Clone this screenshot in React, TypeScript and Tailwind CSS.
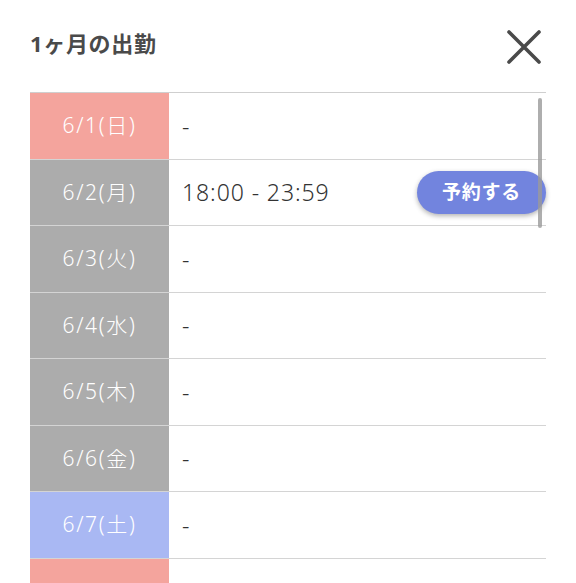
import React from "react";

type Day = { label: string; kind: "sun" | "sat" | "week"; time?: string };

const days: Day[] = [
  { label: "6/1(日)", kind: "sun" },
  { label: "6/2(月)", kind: "week", time: "18:00 - 23:59" },
  { label: "6/3(火)", kind: "week" },
  { label: "6/4(水)", kind: "week" },
  { label: "6/5(木)", kind: "week" },
  { label: "6/6(金)", kind: "week" },
  { label: "6/7(土)", kind: "sat" },
  { label: "6/8(日)", kind: "sun" },
];

const cellBg = {
  sun: "bg-[#f4a49d]",
  sat: "bg-[#a9b8f3]",
  week: "bg-[#acacac]",
};

export default function App() {
  return (
    <div
      className="h-[583px] w-[576px] overflow-hidden bg-white"
      style={{ fontFamily: '"Noto Sans", "Noto Sans CJK JP", sans-serif' }}
    >
      {/* header */}
      <div className="flex h-[92px] items-start justify-between pl-[30px] pr-[32px] pt-[24px]">
        <h2 className="text-[22px] font-bold leading-[38px] tracking-[0.03em] text-[#4a4a4a]">
          1ヶ月の出勤
        </h2>
        <button aria-label="閉じる" className="mt-[3px]">
          <svg width="40" height="40" viewBox="0 0 40 40">
            <path d="M5 5 L35 35 M35 5 L5 35" stroke="#4a4a4a" strokeWidth="3.6" strokeLinecap="round" />
          </svg>
        </button>
      </div>

      {/* list */}
      <div className="relative ml-[30px] w-[516px]">
        <div className="border-t border-[#cfcfcf]">
          {days.map((d) => (
            <div key={d.label} className="flex h-[66.5px] border-b-[1.5px] border-[#d4d4d4]">
              <div
                className={`flex w-[139px] shrink-0 items-center justify-center text-[21px] font-light tracking-[0.08em] text-white ${cellBg[d.kind]}`}
              >
                {d.label}
              </div>
              <div className="flex flex-1 items-center justify-between pl-[13px] text-[23px] font-light tracking-[0.04em] text-[#333]">
                <span>{d.time ?? "-"}</span>
                {d.time && (
                  <button className="h-[43px] w-[129px] rounded-full bg-[#7284de] text-[19px] font-semibold tracking-[0.04em] text-white shadow-[0_2px_5px_rgba(0,0,0,0.3)]">
                    予約する
                  </button>
                )}
              </div>
            </div>
          ))}
        </div>
        {/* scrollbar */}
        <div className="absolute right-[4px] top-[6px] h-[130px] w-[4px] rounded-full bg-[#9a9a9a]/80" />
      </div>
    </div>
  );
}
